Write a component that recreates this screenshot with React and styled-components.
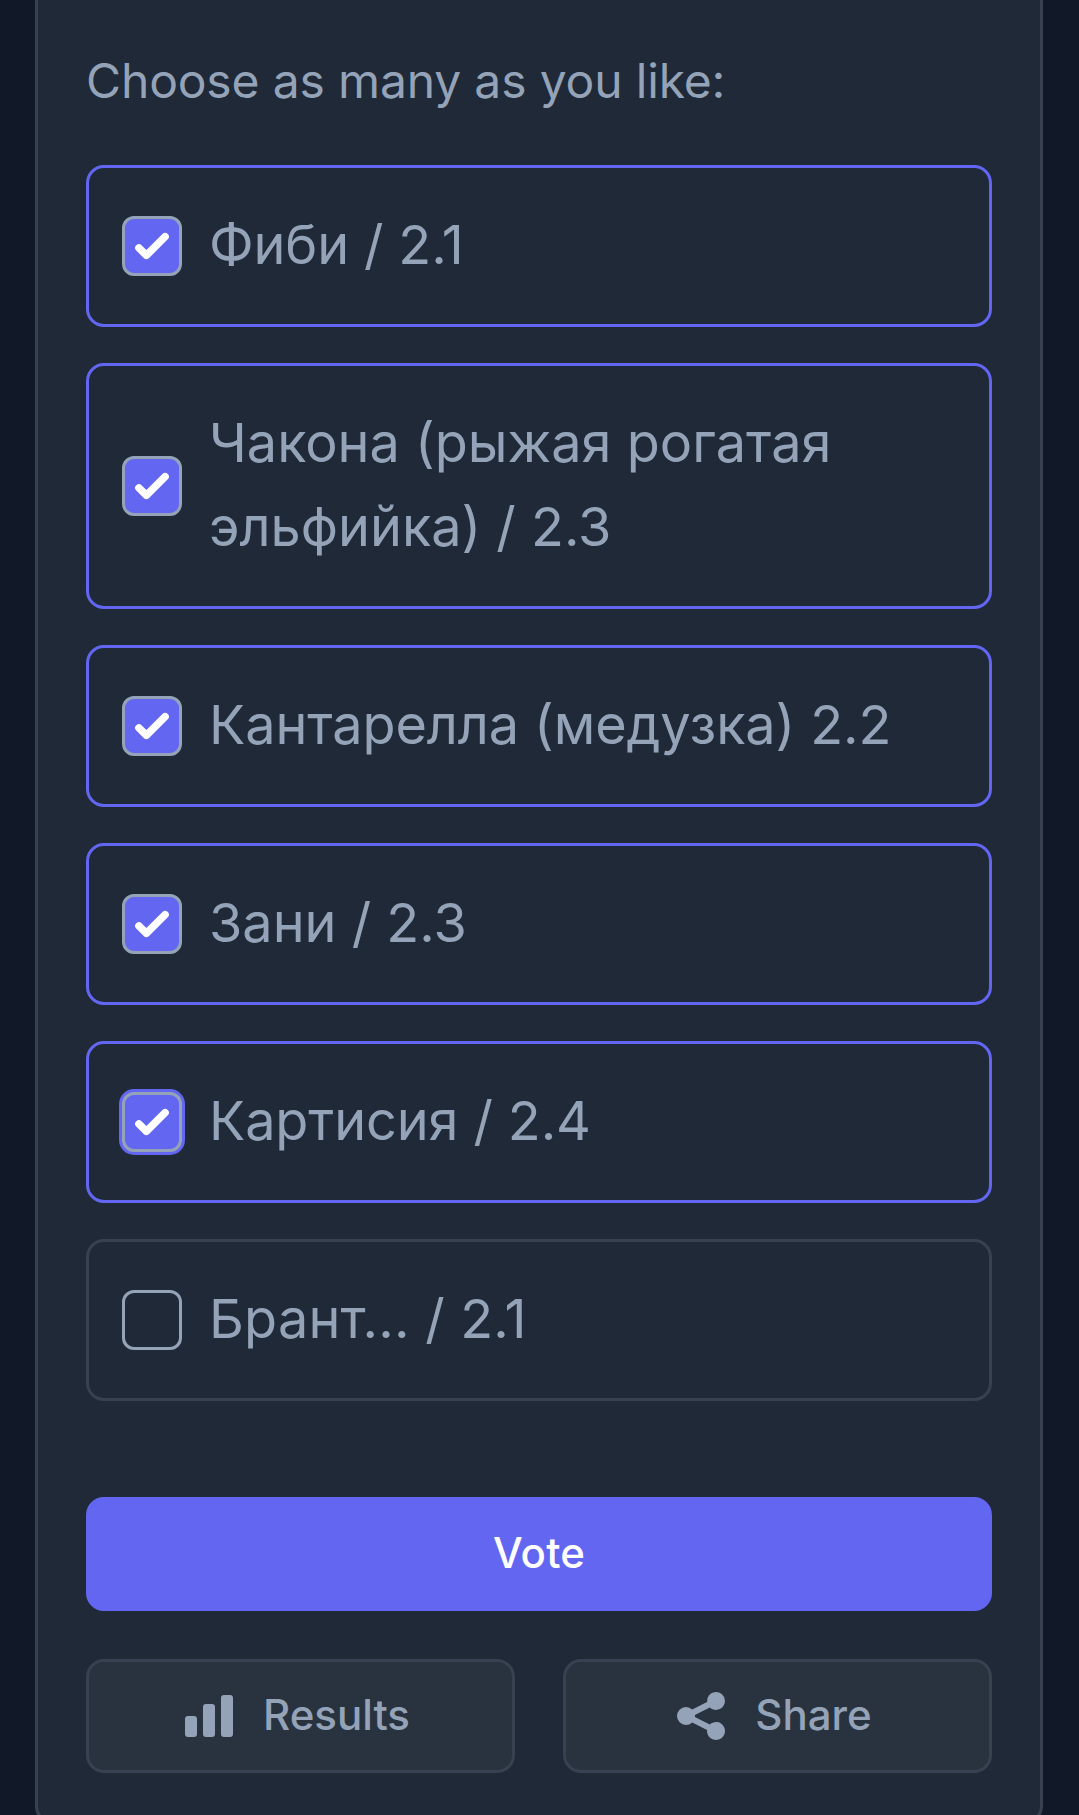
import React, { useState } from "react";
import styled, { createGlobalStyle } from "styled-components";
import { HiChartBar, HiShare } from "react-icons/hi";

const GlobalStyle = createGlobalStyle`
  * {
    box-sizing: border-box;
  }
  body {
    margin: 0;
    background: #111827;
    color: #94a3b8;
    font-family: Inter, "Noto Sans", sans-serif;
  }
`;

const options = [
  { text: "Фиби / 2.1", tracking: -0.15 },
  { text: "Чакона (рыжая рогатая эльфийка) / 2.3", tracking: 0 },
  { text: "Кантарелла (медузка) 2.2", tracking: -0.1 },
  { text: "Зани / 2.3", tracking: 0 },
  { text: "Картисия / 2.4", tracking: -0.12 },
  { text: "Брант... / 2.1", tracking: 0.2 },
];

const App = () => {
  const [checked, setChecked] = useState([0, 1, 2, 3, 4]);
  const [focused, setFocused] = useState(4);

  const toggle = (i) => {
    setFocused(i);
    setChecked(
      checked.includes(i) ? checked.filter((c) => c !== i) : [...checked, i]
    );
  };

  return (
    <Page>
      <GlobalStyle />
      <Card>
        <Heading>Choose as many as you like:</Heading>
        <Options>
          {options.map(({ text, tracking }, i) => (
            <Option
              key={text}
              $checked={checked.includes(i)}
              onClick={() => toggle(i)}
            >
              <Box $checked={checked.includes(i)} $focused={focused === i}>
                {checked.includes(i) && (
                  <svg viewBox="0 0 16 16" fill="#fff">
                    <path d="M12.207 4.793a1 1 0 010 1.414l-5 5a1 1 0 01-1.414 0l-2-2a1 1 0 011.414-1.414L6.5 9.086l4.293-4.293a1 1 0 011.414 0z" />
                  </svg>
                )}
              </Box>
              <Label $tracking={tracking}>{text}</Label>
            </Option>
          ))}
        </Options>

        <VoteButton>
          <span>Vote</span>
        </VoteButton>

        <Actions>
          <ActionButton>
            <HiChartBar />
            <span>Results</span>
          </ActionButton>
          <ActionButton>
            <HiShare />
            <span>Share</span>
          </ActionButton>
        </Actions>
      </Card>
    </Page>
  );
};

const Page = styled.main`
  height: 1815px;
  padding: 0 36px 0 35px;
  overflow: hidden;
`;

const Card = styled.section`
  height: 1824px;
  padding: 45px 48px 48px;
  background: #1f2937;
  border: 3px solid #374151;
  border-top: 0;
  border-radius: 0 0 18px 18px;
`;

const Heading = styled.h2`
  margin: 0 0 48px;
  font-size: 48px;
  font-weight: 400;
  line-height: 72px;
  letter-spacing: -0.16px;
`;

const Options = styled.div`
  display: flex;
  flex-direction: column;
  gap: 36px;
`;

const Option = styled.div`
  display: flex;
  align-items: center;
  gap: 27px;
  padding: 36px 33px;
  border: 3px solid ${(p) => (p.$checked ? "#6366f1" : "#374151")};
  border-radius: 18px;
  cursor: pointer;
`;

const Box = styled.span`
  flex: none;
  width: 60px;
  height: 60px;
  border: 3px solid #94a3b8;
  border-radius: 12px;
  background: ${(p) => (p.$checked ? "#6366f1" : "transparent")};
  box-shadow: ${(p) => (p.$focused ? "0 0 0 3px #6366f1" : "none")};

  svg {
    display: block;
    width: 60px;
    height: 60px;
    margin: -3px;
  }
`;

const Label = styled.span`
  margin: -1px 0 1px;
  font-size: 54px;
  line-height: 84px;
  letter-spacing: ${(p) => p.$tracking}px;
`;

const Button = styled.button`
  display: flex;
  align-items: center;
  justify-content: center;
  width: 100%;
  height: 114px;
  padding: 0 48px;
  border-radius: 18px;
  font: 500 42px/60px Inter, "Noto Sans", sans-serif;
  cursor: pointer;

  span {
    margin-top: -2px;
  }
`;

const VoteButton = styled(Button)`
  margin-top: 96px;
  border: 3px solid #6366f1;
  background: #6366f1;
  color: #fff;
  letter-spacing: 0.2px;
`;

const Actions = styled.div`
  display: grid;
  grid-template-columns: 1fr 1fr;
  gap: 48px;
  margin-top: 48px;
`;

const ActionButton = styled(Button)`
  border: 3px solid #374151;
  background: #29333f;
  color: #94a3b8;

  svg {
    width: 60px;
    height: 60px;
    margin: 0 24px 0 -12px;
  }
`;

export default App;
